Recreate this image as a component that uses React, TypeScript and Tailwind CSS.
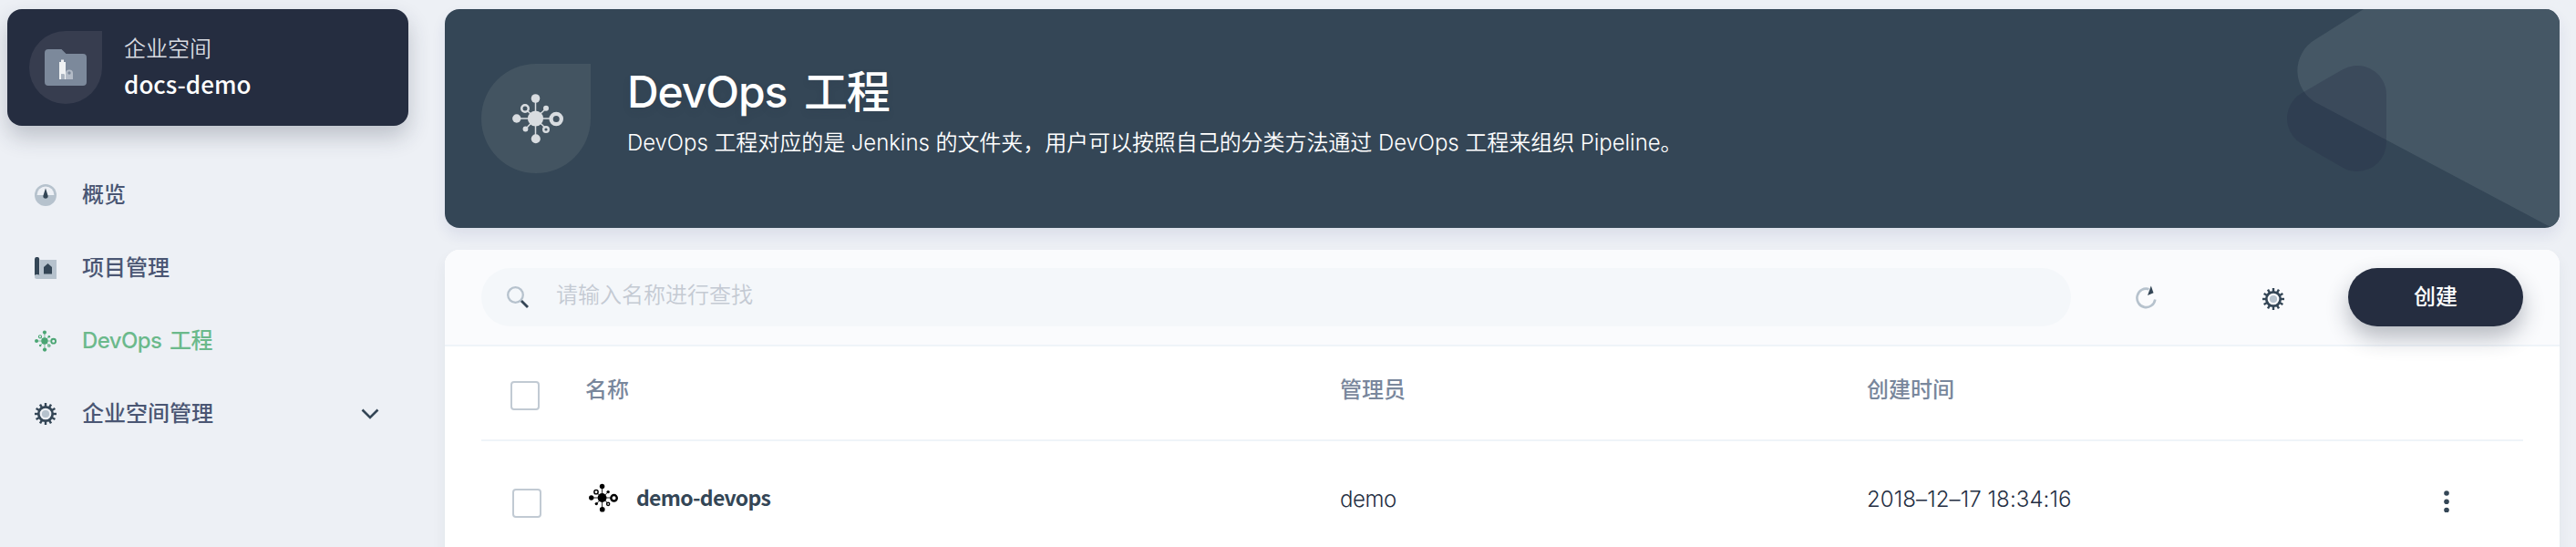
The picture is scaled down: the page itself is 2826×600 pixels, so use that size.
import React from 'react';

const cjk = "font-['Inter','Noto_Sans_CJK_SC',sans-serif]";

function DevopsIcon({ className }: { className: string }) {
  return (
    <svg viewBox="0 0 56 56" className={className} fill="currentColor" stroke="currentColor">
      <g strokeWidth="1.5">
        <path d="M25.5 8V50M6 28H41M16 19L25.5 28L37 17M15 39L25.5 28L36 38" fill="none" />
      </g>
      <g stroke="none">
        <circle cx="25.5" cy="28" r="8.6" />
        <circle cx="25.5" cy="6" r="4.8" />
        <circle cx="25.8" cy="50.3" r="5" />
        <circle cx="4.8" cy="28" r="4.7" />
        <circle cx="37" cy="16.8" r="3" />
        <circle cx="14.5" cy="39.5" r="2.9" />
      </g>
      <path
        stroke="none"
        fillRule="evenodd"
        d="M40.4 28.5a7.8 7.8 0 1 0 15.6 0a7.8 7.8 0 1 0 -15.6 0zM44.7 28.5a3.5 3.5 0 1 0 7 0a3.5 3.5 0 1 0 -7 0zM9 17a5 5 0 1 0 10 0a5 5 0 1 0 -10 0zM11.5 17a2.5 2.5 0 1 0 5 0a2.5 2.5 0 1 0 -5 0zM33 40a4 4 0 1 0 8 0a4 4 0 1 0 -8 0zM35.4 40a1.6 1.6 0 1 0 3.2 0a1.6 1.6 0 1 0 -3.2 0z"
      />
    </svg>
  );
}

const teeth = [0, 30, 60, 90, 120, 150, 180, 210, 240, 270, 300, 330];

function GearIcon() {
  return (
    <svg viewBox="0 0 24 24" className="size-6 shrink-0">
      {teeth.map((a) => (
        <rect key={a} x="10.8" y="0" width="2.4" height="4" fill="#344656" transform={`rotate(${a} 12 12)`} />
      ))}
      <circle cx="12" cy="12" r="7.7" fill="none" stroke="#344656" strokeWidth="2.7" />
      <circle cx="12" cy="12" r="4.1" fill="#b6c2cd" />
    </svg>
  );
}

function OverviewIcon() {
  return (
    <svg viewBox="0 0 24 24" className="size-6 shrink-0">
      <circle cx="12" cy="12" r="12" fill="#b6c2cd" />
      <path d="M2.6 12a9.4 9.4 0 0 1 18.8 0z" fill="#edf0f5" />
      <path d="M12 4.5L14.7 13a2.7 2.7 0 1 1 -5.4 0z" fill="#344656" />
    </svg>
  );
}

function ProjectIcon() {
  return (
    <svg viewBox="0 0 24 24" className="size-6 shrink-0">
      <path d="M6 3H24V24H2.5A2.5 2.5 0 0 1 2.5 19H6z" fill="#b6c2cd" />
      <path d="M0 2.5a2.6 2.6 0 0 1 5.2 0V19.5C3.5 18.6 1.5 18.6 0 20z" fill="#344656" />
      <path d="M14.5 7L19 11V18.5H10V11z" fill="#344656" />
    </svg>
  );
}

function FolderIcon() {
  return (
    <svg viewBox="0 0 46 40" className="h-10 w-[46px]">
      <path d="M4 0H18.5L23.5 5H42a4 4 0 0 1 4 4V36a4 4 0 0 1 -4 4H4a4 4 0 0 1 -4 -4V4a4 4 0 0 1 4 -4z" fill="#7c899b" />
      <path d="M23 33V26.5a4 4 0 0 1 8 0V33z" fill="#b3bbc7" />
      <circle cx="27" cy="26" r="1.7" fill="#7c899b" />
      <path d="M16 33V14H18V11.5H21V14H23V33H21.5V27.5H18V33z" fill="#eff1f3" />
      <path d="M18 27.5h3.5V33H18z" fill="#a9b2bf" />
    </svg>
  );
}

const navItems = [
  { label: '概览', icon: <OverviewIcon />, color: 'text-[#4a5673]' },
  { label: '项目管理', icon: <ProjectIcon />, color: 'text-[#4a5673]' },
  {
    label: 'DevOps 工程',
    icon: <DevopsIcon className="size-6 shrink-0 text-[#4aa573]" />,
    color: 'text-[#6bb98b] tracking-[-0.6px] [word-spacing:3px]',
  },
  { label: '企业空间管理', icon: <GearIcon />, color: 'text-[#4a5673]', expandable: true },
];

function Sidebar() {
  return (
    <aside className="w-[440px] shrink-0">
      <div className="flex h-32 items-center rounded-2xl bg-[#252d40] pl-6 shadow-[0_12px_24px_0_rgba(36,46,66,0.24)]">
        <div className="flex size-20 items-center justify-center rounded-full rounded-tr-none bg-[#373d4f]">
          <FolderIcon />
        </div>
        <div className="-mt-0.5 ml-6 flex flex-col">
          <span className="text-[24px] leading-[38px] font-[350] text-[#d9dce2]">企业空间</span>
          <span className="-mt-px font-['Noto_Sans_CJK_SC',sans-serif] text-[26px] leading-[40px] font-medium text-white">docs-demo</span>
        </div>
      </div>
      <nav className="mt-9 flex flex-col">
        {navItems.map((item) => (
          <a key={item.label} className={`flex h-20 items-center pl-[30px] text-[24px] font-medium ${item.color}`}>
            {item.icon}
            <span className="-mt-px ml-7">{item.label}</span>
            {item.expandable && (
              <svg viewBox="0 0 20 12" className="mr-8 ml-auto h-3 w-5" fill="none" stroke="#344656" strokeWidth="2.6">
                <path d="M1.5 1.5L10 10L18.5 1.5" />
              </svg>
            )}
          </a>
        ))}
      </nav>
    </aside>
  );
}

function Banner() {
  return (
    <header className="relative flex h-60 shrink-0 items-center overflow-hidden rounded-2xl bg-[#344656] pl-10">
      <svg viewBox="0 0 320 240" className="absolute top-0 right-0 h-60 w-80">
        <path d="M105 0L52.5 33A40 40 0 0 0 54.5 103.5L312 240H320V0z" fill="#455765" />
        <g opacity="0.3">
          <path d="M53 120L98 94V146z" fill="#252d46" stroke="#252d46" strokeWidth="64" strokeLinejoin="round" />
        </g>
      </svg>
      <div className="flex size-[120px] items-center justify-center rounded-full rounded-tr-none bg-[#435461]">
        <DevopsIcon className="ml-1 size-14 text-[#d8dce0]" />
      </div>
      <div className="-mt-3 ml-10 flex flex-col text-white">
        <h1 className="text-[48px] leading-[66px] font-[550] tracking-[-1.1px] [text-shadow:0_4px_8px_rgba(36,46,66,0.1)] [word-spacing:7px]">
          DevOps 工程
        </h1>
        <p className="text-[24px] leading-[46px] font-[350] tracking-[-0.06px]">
          DevOps 工程对应的是 Jenkins 的文件夹，用户可以按照自己的分类方法通过 DevOps 工程来组织 Pipeline。
        </p>
      </div>
    </header>
  );
}

function Toolbar() {
  return (
    <div className="flex h-[106px] items-center border-b-2 border-[#eff4f9] bg-[#fafbfd] px-10">
      <div className="flex h-16 w-[1744px] items-center rounded-full bg-[#f4f7fa] pl-7">
        <svg viewBox="0 0 24 24" className="size-6" fill="none">
          <circle cx="9.5" cy="9.5" r="8.3" stroke="#b6c2cd" strokeWidth="2.3" />
          <path d="M16 16L23 23" stroke="#344656" strokeWidth="2.8" />
        </svg>
        <span className="-mt-1 ml-[30px] text-[24px] font-[350] text-[#c4cad3]">请输入名称进行查找</span>
      </div>
      <svg viewBox="0 0 24 26" className="ml-[71px] h-[26px] w-6" fill="none">
        <path d="M14.5 4.2A10 10.2 0 1 0 21.3 15.5" stroke="#b6c2cd" strokeWidth="2.6" />
        <path d="M16.8 0.5L19.5 8.3L13 11z" fill="#344656" />
      </svg>
      <div className="mt-1 ml-[115px]">
        <GearIcon />
      </div>
      <button className="ml-auto h-16 w-48 rounded-full bg-[#252d40] text-[24px] font-medium text-white shadow-[0_12px_24px_0_rgba(36,46,66,0.32)]">
        创建
      </button>
    </div>
  );
}

function Checkbox({ className }: { className: string }) {
  return <span className={`block size-8 shrink-0 rounded border-2 border-[#c1cad3] bg-white ${className}`} />;
}

function ProjectTable() {
  return (
    <div className="px-10">
      <div className="flex h-[104px] items-center border-b-2 border-[#eff4f9] text-[24px] font-medium text-[#79879c]">
        <Checkbox className="mt-1.5 ml-8" />
        <span className="-mt-1.5 ml-[50px] w-[828px]">名称</span>
        <span className="-mt-1.5 w-[578px]">管理员</span>
        <span className="-mt-1.5">创建时间</span>
      </div>
      <div className="flex h-[136px] items-center text-[24px] text-[#242e42]">
        <Checkbox className="ml-[34px]" />
        <DevopsIcon className="-mt-3 ml-[52px] size-8 text-black" />
        <span className="-mt-3.5 ml-5 w-[772px] font-['Noto_Sans_CJK_SC',sans-serif] text-[23px] font-bold tracking-[-0.7px] text-[#344656]">
          demo-devops
        </span>
        <span className="-mt-2 w-[578px] font-[350] tracking-[-0.4px]">demo</span>
        <span className="-mt-2 w-[633px] font-[350] tracking-[0.1px]">2018–12–17 18:34:16</span>
        <svg viewBox="0 0 6 24" className="-mt-1 h-6 w-1.5" fill="#344656">
          <circle cx="3" cy="3" r="2.8" />
          <circle cx="3" cy="12.3" r="2.8" />
          <circle cx="3" cy="21.6" r="2.8" />
        </svg>
      </div>
    </div>
  );
}

export default function App() {
  return (
    <div className={`flex h-[600px] w-[2826px] overflow-hidden bg-[#edf0f5] pt-2.5 pl-2 ${cjk}`}>
      <Sidebar />
      <main className="ml-10 flex w-[2320px] shrink-0 flex-col gap-6">
        <div className="rounded-2xl shadow-[0_8px_16px_0_rgba(33,43,120,0.09)]">
          <Banner />
        </div>
        <section className="h-[360px] shrink-0 overflow-hidden rounded-t-2xl bg-white shadow-[0_8px_16px_0_rgba(36,46,66,0.06)]">
          <Toolbar />
          <ProjectTable />
        </section>
      </main>
    </div>
  );
}
